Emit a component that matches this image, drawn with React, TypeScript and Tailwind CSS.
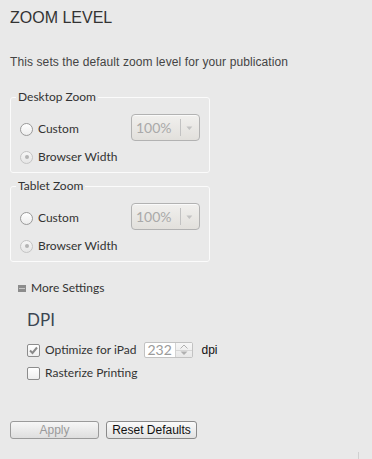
import React from "react";

const labelFont = { fontFamily: "Lato, 'Open Sans', sans-serif" };

function Radio({ checked }: { checked?: boolean }) {
  return (
    <span
      className={
        "relative inline-block w-[13px] h-[13px] rounded-full border shrink-0 " +
        (checked
          ? "border-[#c4c4c4] bg-gradient-to-b from-[#f6f6f6] to-[#e6e6e6]"
          : "border-[#9a9a9a] bg-gradient-to-b from-[#ffffff] to-[#ececec]")
      }
    >
      {checked && (
        <span className="absolute left-[3.5px] top-[3.5px] w-[4px] h-[4px] rounded-full bg-[#b4b4b4]" />
      )}
    </span>
  );
}

function SelectBox() {
  return (
    <div className="flex items-center w-[69px] h-[27px] rounded-[4px] border border-[#b2b2b2] bg-gradient-to-b from-[#f1f0ee] to-[#e2e0dc] shadow-[inset_0_1px_0_#fafafa]">
      <span className="pl-[4px] w-[49px] text-[14px] text-[#a9a9a9]" style={labelFont}>
        100%
      </span>
      <span className="w-px h-[17px] bg-[#c2c2c2]" />
      <svg width="18" height="10" viewBox="0 0 18 10">
        <path d="M5.5 3.5 L11.5 3.5 L8.5 7 Z" fill="#c2c2c2" />
      </svg>
    </div>
  );
}

function ZoomFieldset({ title }: { title: string }) {
  return (
    <fieldset className="w-[200px] border border-[#fbfbfb] rounded-[3px] pl-[9px] pr-[9px] pb-[5px]">
      <legend className="ml-[-4px] px-[2px] text-[12px] leading-[14px] text-[#333]" style={labelFont}>
        {title}
      </legend>
      <div className="mt-[10px] h-[27px] flex items-center justify-between">
        <label className="flex items-center gap-[5px] mt-[3px] text-[12px] text-[#333]" style={labelFont}>
          <Radio />
          Custom
        </label>
        <SelectBox />
      </div>
      <div className="mt-[6px] h-[20px] flex items-center">
        <label className="flex items-center gap-[5px] text-[12px] text-[#333]" style={labelFont}>
          <Radio checked />
          Browser Width
        </label>
      </div>
    </fieldset>
  );
}

function Checkbox({ checked }: { checked?: boolean }) {
  return (
    <span className="relative inline-flex items-center justify-center w-[13px] h-[13px] border border-[#8c8c8c] rounded-[2px] bg-gradient-to-b from-[#ffffff] to-[#eeeeee] shrink-0">
      {checked && (
        <svg width="11" height="11" viewBox="0 0 11 11">
          <path d="M2 5.5 L4.5 8 L9 2.5" stroke="#8a8a8a" strokeWidth="2" fill="none" />
        </svg>
      )}
    </span>
  );
}

export default function App() {
  return (
    <div
      className="relative w-[372px] h-[459px] overflow-hidden bg-[#e9e9e9] px-[10px]"
      style={{ fontFamily: "'Liberation Sans', Arial, sans-serif" }}
    >
      <div className="pt-[8px] text-[16px] leading-[20px] text-[#333]">ZOOM LEVEL</div>
      <div className="mt-[26px] text-[12px] leading-[16px] tracking-[0.1px] text-[#444]">
        This sets the default zoom level for your publication
      </div>

      <div className="mt-[20px]">
        <ZoomFieldset title="Desktop Zoom" />
      </div>
      <div className="mt-[6px]">
        <ZoomFieldset title="Tablet Zoom" />
      </div>

      <div className="mt-[18px] ml-[8px] flex items-center gap-[5px] text-[12px] leading-[16px] text-[#333]" style={labelFont}>
        <svg width="8" height="7" viewBox="0 0 8 7">
          <rect x="0" y="0" width="8" height="7" fill="#8c8c8c" />
          <rect x="1" y="3" width="6" height="1" fill="#c8c8c8" />
        </svg>
        More Settings
      </div>

      <div className="mt-[14px] ml-[17px] text-[17px] leading-[20px] text-[#3c4652]" style={labelFont}>
        DPI
      </div>

      <div className="mt-[12px] ml-[17px] flex items-center h-[16px] text-[12px] text-[#333]" style={labelFont}>
        <Checkbox checked />
        <span className="ml-[5px]">Optimize for iPad</span>
        <div className="ml-[8px] flex h-[16px] w-[49px] border border-[#c2c2c2] rounded-[2px] bg-white">
          <span className="flex-1 pl-[2px] text-[14px] leading-[14px] text-[#9a9a9a]">232</span>
          <div className="w-[17px] flex flex-col border-l border-[#d2d2d2] bg-gradient-to-b from-[#f7f7f7] to-[#e8e8e8]">
            <div className="flex-1 flex items-center justify-center border-b border-[#d6d6d6]">
              <svg width="8" height="5" viewBox="0 0 8 5">
                <path d="M0.5 4.5 L4 1 L7.5 4.5" stroke="#b0b0b0" fill="none" />
              </svg>
            </div>
            <div className="flex-1 flex items-center justify-center">
              <svg width="8" height="5" viewBox="0 0 8 5">
                <path d="M0.5 0.5 L7.5 0.5 L4 4 Z" fill="#b0b0b0" />
              </svg>
            </div>
          </div>
        </div>
        <span className="ml-[8px] text-[12px] text-[#111]" style={{ fontFamily: "'Liberation Sans', Arial, sans-serif" }}>
          dpi
        </span>
      </div>

      <div className="mt-[7px] ml-[17px] flex items-center h-[16px] text-[12px] text-[#333]" style={labelFont}>
        <Checkbox />
        <span className="ml-[5px]">Rasterize Printing</span>
      </div>

      <div className="mt-[40px] flex items-center gap-[7px]">
        <button className="w-[89px] h-[18px] rounded-[3px] border border-[#9a9a9a] bg-gradient-to-b from-[#f6f6f6] to-[#dedede] text-[12px] leading-[14px] text-[#9a9a9a]">
          Apply
        </button>
        <button className="w-[91px] h-[18px] rounded-[3px] border border-[#8a8a8a] bg-gradient-to-b from-[#fafafa] to-[#e2e2e2] text-[12px] leading-[14px] text-[#111]">
          Reset Defaults
        </button>
      </div>

      <div className="absolute left-[358px] top-[452px] w-px h-[7px] bg-[#d0d0d0]" />
    </div>
  );
}
